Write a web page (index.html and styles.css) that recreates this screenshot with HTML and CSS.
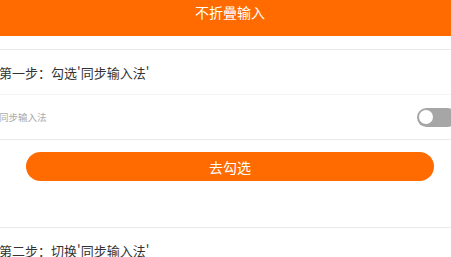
FILE: index.html
```html
<!DOCTYPE html>
<html lang="zh">
<head>
<meta charset="utf-8">
<title>不折疊输入</title>
<link rel="stylesheet" href="styles.css">
</head>
<body>
<div class="page">
  <header class="topbar">不折疊输入</header>
  <div class="spacer-top"></div>
  <section class="step">
    <div class="step-title">第一步：勾选'同步输入法'</div>
    <div class="setting">
      <span class="setting-label">同步输入法</span>
      <span class="toggle"><span class="knob"></span></span>
    </div>
  </section>
  <div class="action">
    <button class="btn" type="button">去勾选</button>
  </div>
  <section class="step step-two">
    <div class="step-title">第二步：切换'同步输入法'</div>
  </section>
</div>
</body>
</html>
```

FILE: styles.css
```css
html, body {
  margin: 0;
  padding: 0;
  overflow: hidden;
  background: #ffffff;
}

body {
  font-family: "Noto Sans CJK SC", "Noto Sans", sans-serif;
}

.page {
  width: 460px;
}

.topbar {
  height: 36px;
  box-sizing: border-box;
  padding-top: 2px;
  background: #ff6b00;
  color: #ffffff;
  font-size: 14px;
  line-height: 20px;
  text-align: center;
}

.spacer-top {
  height: 13px;
}

.step {
  border-top: 1px solid #e9e9e9;
}

.step-title {
  height: 45px;
  box-sizing: border-box;
  display: flex;
  align-items: center;
  margin-left: -1px;
  font-size: 13px;
  color: #333333;
  border-bottom: 1px solid #f5f5f5;
}

.setting {
  height: 45px;
  box-sizing: border-box;
  display: flex;
  align-items: center;
  justify-content: space-between;
  padding-right: 3px;
  border-bottom: 1px solid #e9e9e9;
}

.setting-label {
  margin-left: -1px;
  font-size: 9.5px;
  color: #a9a9a9;
}

.toggle {
  width: 40px;
  height: 19px;
  border-radius: 10px;
  background: #a6a6a6;
  display: flex;
  align-items: center;
  padding-left: 2px;
  box-sizing: border-box;
}

.knob {
  width: 14px;
  height: 14px;
  border-radius: 50%;
  background: #ffffff;
}

.action {
  padding: 12px 26px 0;
  height: 87px;
  box-sizing: border-box;
}

.btn {
  display: block;
  width: 100%;
  height: 29px;
  border: none;
  border-radius: 15px;
  background: #ff6b00;
  color: #ffffff;
  font-family: inherit;
  font-size: 14px;
  padding: 0;
}

.step-two .step-title {
  border-bottom: none;
}
```
